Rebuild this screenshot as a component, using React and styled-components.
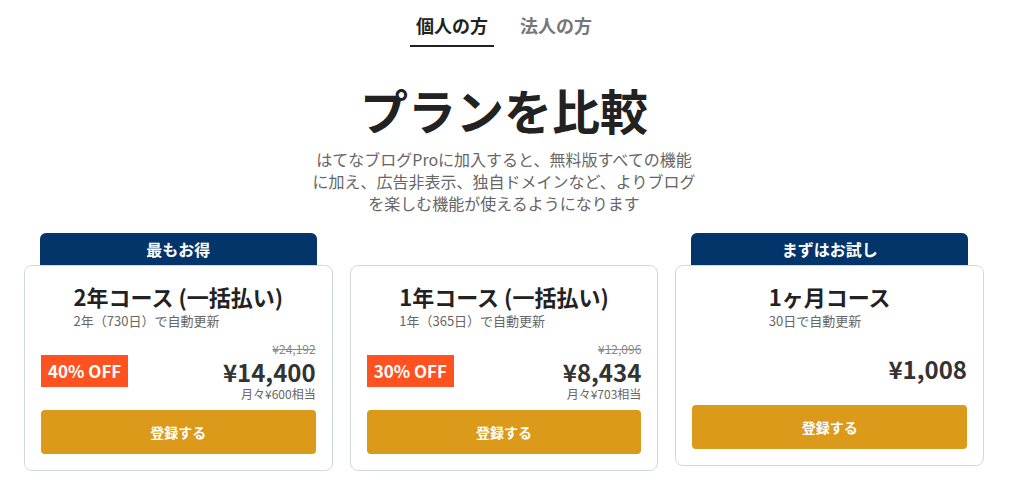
import React from 'react';
import styled, { createGlobalStyle } from 'styled-components';

const GlobalStyle = createGlobalStyle`
  body {
    margin: 0;
    background: #fff;
    font-family: "Noto Sans CJK JP", "Noto Sans", sans-serif;
    color: #222;
  }
`;

const Page = styled.div`
  display: flex;
  flex-direction: column;
  align-items: center;
  padding-right: 4px;
`;

const Tabs = styled.nav`
  display: flex;
  gap: 20px;
`;

const Tab = styled.div`
  padding: 12px 6px 7px;
  font-size: 18px;
  line-height: 26px;
  font-weight: 700;
  color: ${(p) => (p.active ? '#222' : '#777')};
  border-bottom: 2px solid ${(p) => (p.active ? '#222' : 'transparent')};
`;

const Title = styled.h1`
  margin: 32px 0 0;
  font-size: 48px;
  line-height: 60px;
  font-weight: 700;
  color: #222;
`;

const Lead = styled.p`
  margin: 9px 0 0;
  font-size: 16px;
  line-height: 22px;
  color: #666;
  text-align: center;
`;

const Plans = styled.div`
  display: grid;
  grid-template-columns: repeat(3, 1fr);
  gap: 17px;
  width: 960px;
  margin-top: 19px;
  align-items: start;
`;

const Column = styled.div`
  display: flex;
  flex-direction: column;
`;

const Ribbon = styled.div`
  margin: 0 16px;
  height: 32px;
  line-height: 32px;
  border-radius: 6px 6px 0 0;
  background: ${(p) => (p.empty ? 'transparent' : '#03346a')};
  color: #fff;
  font-size: 16px;
  font-weight: 700;
  text-align: center;
`;

const Card = styled.div`
  border: 1px solid #d3d8de;
  border-radius: 8px;
  padding: 16px;
  background: #fff;
  display: flex;
  flex-direction: column;
`;

const Heading = styled.div`
  align-self: center;
  display: flex;
  flex-direction: column;
`;

const CourseName = styled.div`
  font-size: 22px;
  line-height: 28px;
  font-weight: 700;
  color: #222;
`;

const Renewal = styled.div`
  margin-top: 2px;
  font-size: 13px;
  line-height: 18px;
  color: #666;
`;

const PriceRow = styled.div`
  margin-top: 10px;
  min-height: 57px;
  display: flex;
  align-items: center;
  justify-content: space-between;
`;

const Badge = styled.div`
  background: #fe5220;
  color: #fff;
  font-size: 17px;
  font-weight: 700;
  height: 32px;
  line-height: 32px;
  padding: 0 7px;
`;

const PriceBox = styled.div`
  margin-left: auto;
  display: flex;
  flex-direction: column;
  align-items: flex-end;
`;

const OldPrice = styled.s`
  font-size: 12px;
  line-height: 18px;
  color: #888;
`;

const Price = styled.div`
  font-size: 24px;
  line-height: 28px;
  font-weight: 700;
  color: #333;
`;

const Monthly = styled.div`
  font-size: 12px;
  line-height: 16px;
  color: #666;
`;

const Button = styled.button`
  margin-top: 8px;
  height: 44px;
  border: none;
  border-radius: 4px;
  background: #dc9a1a;
  color: #fff;
  font-family: inherit;
  font-size: 14px;
  font-weight: 700;
  cursor: pointer;
`;

const plans = [
  {
    ribbon: '最もお得',
    name: '2年コース (一括払い)',
    renewal: '2年（730日）で自動更新',
    off: '40% OFF',
    old: '¥24,192',
    price: '¥14,400',
    monthly: '月々¥600相当',
  },
  {
    name: '1年コース (一括払い)',
    renewal: '1年（365日）で自動更新',
    off: '30% OFF',
    old: '¥12,096',
    price: '¥8,434',
    monthly: '月々¥703相当',
  },
  {
    ribbon: 'まずはお試し',
    name: '1ヶ月コース',
    renewal: '30日で自動更新',
    price: '¥1,008',
  },
];

export default function App() {
  return (
    <>
      <GlobalStyle />
      <Page>
        <Tabs>
          <Tab active>個人の方</Tab>
          <Tab>法人の方</Tab>
        </Tabs>
        <Title>プランを比較</Title>
        <Lead>
          はてなブログProに加入すると、無料版すべての機能
          <br />
          に加え、広告非表示、独自ドメインなど、よりブログ
          <br />
          を楽しむ機能が使えるようになります
        </Lead>
        <Plans>
          {plans.map((p) => (
            <Column key={p.name}>
              <Ribbon empty={!p.ribbon}>{p.ribbon}</Ribbon>
              <Card>
                <Heading>
                  <CourseName>{p.name}</CourseName>
                  <Renewal>{p.renewal}</Renewal>
                </Heading>
                <PriceRow>
                  {p.off && <Badge>{p.off}</Badge>}
                  <PriceBox>
                    {p.old && <OldPrice>{p.old}</OldPrice>}
                    <Price>{p.price}</Price>
                    {p.monthly && <Monthly>{p.monthly}</Monthly>}
                  </PriceBox>
                </PriceRow>
                <Button>登録する</Button>
              </Card>
            </Column>
          ))}
        </Plans>
      </Page>
    </>
  );
}
